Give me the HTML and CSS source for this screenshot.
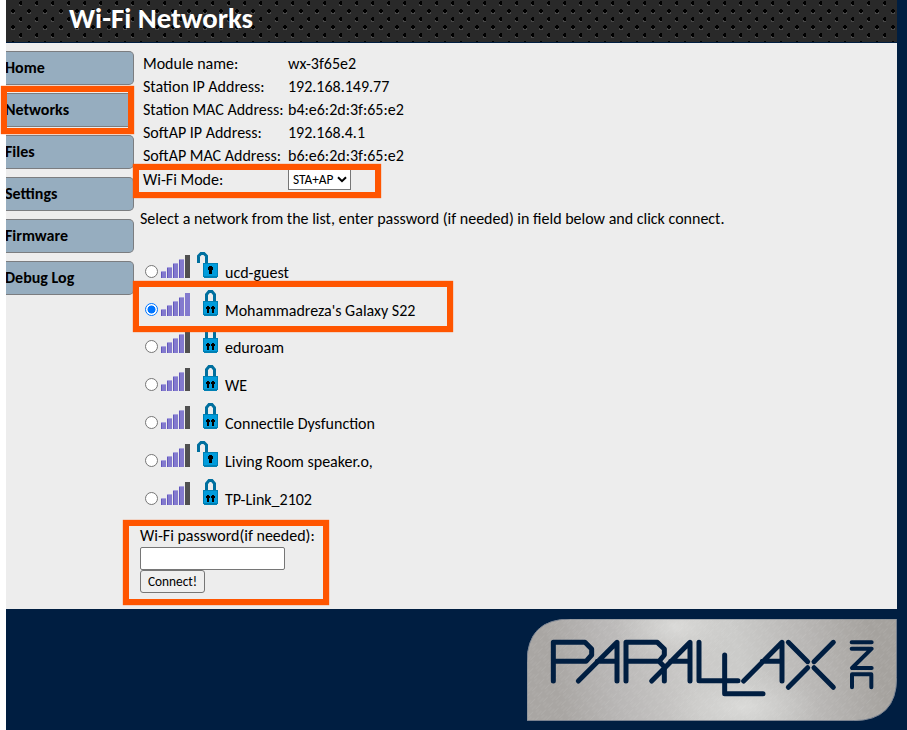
FILE: index.html
```html
<!DOCTYPE html>
<html lang="en">
<head>
<meta charset="utf-8">
<title>Wi-Fi Networks</title>
<link rel="stylesheet" href="styles.css">
</head>
<body>
<svg class="defs" width="0" height="0" aria-hidden="true">
  <symbol id="signal" viewBox="0 0 29 23">
    <g fill="#837ace"><path d="M0 16h5v7H0zM6 12h5v11H6zM12 8h5v15h-5zM18 4h5v19h-5z"/></g>
    <g fill="#aaa4df"><path d="M0 16h5v1H0zM6 12h5v1H6zM12 8h5v1h-5zM18 4h5v1h-5z"/></g>
    <path fill="#6257bd" d="M0 17h1v6H0zM6 13h1v10H6zM12 9h1v14h-1zM18 5h1v18h-1z"/>
  </symbol>
  <symbol id="closed" viewBox="0 0 21 26">
    <path d="M9.500 13V4.500L12 1.500h3L17.500 4.500V13" fill="none" stroke="#006f9e" stroke-width="3"/>
    <path fill="#0080b4" d="M6 11h15v14h-1v1H7v-1H6z"/><path fill="#009cdc" d="M7 12h13v12H7z"/>
    <path d="M10 16h2v1h1v2h-1v4h-2v-4H9v-2h1zM15 16h2v1h1v2h-1v4h-2v-4h-1v-2h1z"/>
  </symbol>
  <symbol id="open" viewBox="0 0 21 26">
    <path d="M1.500 11V4L4 1.500h3L9.500 4V11" fill="none" stroke="#006f9e" stroke-width="3"/>
    <path fill="#0080b4" d="M6 11h15v14h-1v1H7v-1H6z"/><path fill="#009cdc" d="M7 12h13v12H7z"/>
    <path d="M12 14h3v1h1v3h-1v4h-3v-4h-1v-3h1z"/>
  </symbol>
</svg>
<div class="page">
  <header class="header"><svg class="dots" width="891" height="42" aria-hidden="true">
    <defs><pattern id="mesh" width="16" height="16" patternUnits="userSpaceOnUse">
      <path fill="#484848" d="M13 4h4v2h-4zM5 12h4v2H5z"/>
      <path d="M14 1h2v1h1v2h-1v1h-2v-1h-1v-2h1zM6 9h2v1h1v2H8v1H6v-1H5v-2h1z"/>
    </pattern></defs><rect width="891" height="42" fill="url(#mesh)"/></svg><h1>Wi-Fi Networks</h1></header>
  <div class="body">
    <nav class="menu">
      <a>Home</a><a>Networks</a><a>Files</a><a>Settings</a><a>Firmware</a><a>Debug Log</a>
    </nav>
    <main class="content">
      <dl class="info">
        <dt>Module name:</dt><dd>wx-3f65e2</dd>
        <dt>Station IP Address:</dt><dd>192.168.149.77</dd>
        <dt>Station MAC Address:</dt><dd>b4:e6:2d:3f:65:e2</dd>
        <dt>SoftAP IP Address:</dt><dd>192.168.4.1</dd>
        <dt>SoftAP MAC Address:</dt><dd>b6:e6:2d:3f:65:e2</dd>
        <dt>Wi-Fi Mode:</dt><dd><span class="select">STA+AP<svg width="10" height="7" viewBox="0 0 10 7"><path d="M1 1.200l4 4 4-4" fill="none" stroke="#000" stroke-width="2"/></svg></span></dd>
      </dl>
      <p class="hint">Select a network from the list, enter password (if needed) in field below and click connect.</p>
      <div class="networks">
        <label><i class="radio"></i><svg class="signal"><use href="#signal"/><path class="weak" d="M24 0h5v23h-5z"/></svg><svg class="lock"><use href="#open"/></svg><span>ucd-guest</span></label>
        <label><i class="radio on"></i><svg class="signal"><use href="#signal"/><path class="strong" d="M24 0h5v23h-5z"/></svg><svg class="lock"><use href="#closed"/></svg><span>Mohammadreza's Galaxy S22</span></label>
        <label><i class="radio"></i><svg class="signal"><use href="#signal"/><path class="weak" d="M24 0h5v23h-5z"/></svg><svg class="lock"><use href="#closed"/></svg><span>eduroam</span></label>
        <label><i class="radio"></i><svg class="signal"><use href="#signal"/><path class="weak" d="M24 0h5v23h-5z"/></svg><svg class="lock"><use href="#closed"/></svg><span>WE</span></label>
        <label><i class="radio"></i><svg class="signal"><use href="#signal"/><path class="weak" d="M24 0h5v23h-5z"/></svg><svg class="lock"><use href="#closed"/></svg><span>Connectile Dysfunction</span></label>
        <label><i class="radio"></i><svg class="signal"><use href="#signal"/><path class="weak" d="M24 0h5v23h-5z"/></svg><svg class="lock"><use href="#open"/></svg><span>Living Room speaker.o,</span></label>
        <label><i class="radio"></i><svg class="signal"><use href="#signal"/><path class="weak" d="M24 0h5v23h-5z"/></svg><svg class="lock"><use href="#closed"/></svg><span>TP-Link_2102</span></label>
      </div>
      <div class="form">
        <div class="form-label">Wi-Fi password(if needed):</div>
        <input type="text" class="password">
        <button class="connect">Connect!</button>
      </div>
    </main>
  </div>
  <footer class="footer">
    <svg class="logo" width="370" height="102" viewBox="51 57 1110 306" role="img" aria-label="Parallax Inc">
      <defs>
        <linearGradient id="metal" gradientUnits="userSpaceOnUse" x1="150" y1="300" x2="1080" y2="80">
          <stop offset="0" stop-color="#a9a6a3"/><stop offset=".18" stop-color="#b9b7b6"/><stop offset=".42" stop-color="#cbcac8"/><stop offset=".58" stop-color="#cbcbc9"/><stop offset=".8" stop-color="#b8b6b4"/><stop offset="1" stop-color="#a5a29e"/>
        </linearGradient>
        <radialGradient id="shine"><stop offset="0" stop-color="#dededc" stop-opacity=".8"/><stop offset="1" stop-color="#d0d0ce" stop-opacity="0"/></radialGradient>
        <pattern id="brush" width="31" height="23" patternUnits="userSpaceOnUse" patternTransform="rotate(-45)"><path d="M0 3h18M9 10h20M2 17h13" stroke="#fff" stroke-opacity=".12" stroke-width="2"/></pattern>
        <clipPath id="plate"><path d="M51 362V187Q51 57 181 57H1160V232Q1160 362 1030 362Z"/></clipPath>
      </defs>
      <g clip-path="url(#plate)">
        <path fill="url(#metal)" d="M51 57h1110v306H51z"/>
        <ellipse cx="500" cy="80" rx="190" ry="100" fill="url(#shine)"/>
        <ellipse cx="700" cy="320" rx="230" ry="110" fill="url(#shine)"/>
        <path fill="url(#brush)" d="M51 57h1110v306H51z"/>
      </g>
      <path d="M51 362V187Q51 57 181 57H1160V232Q1160 362 1030 362Z" fill="none" stroke="#7f8794" stroke-width="3"/>
      <g fill="none" stroke="#001e41" stroke-width="15" stroke-linecap="round" stroke-linejoin="round">
        <path d="M130 243V127H225L245 147V165L228 184H130"/>
        <path d="M205 243L321 127V243M262 184H321"/>
        <path d="M348 243V127H442L463 147V165L447 184H348M447 184L463 200V243"/>
        <path d="M425 243L540 127V243M482 184H540"/>
        <path d="M567 127V242H684M644 165V281H759"/>
        <path d="M701 243L816 127V243M757 184H816"/>
        <path d="M835 127L893 185M970 127L912 185M893 203L835 262M912 203L970 262"/>
        <path stroke-width="12" d="M1025 127H1085M1025 146H1085L1026 204H1085M1026 262V223H1084V262"/>
      </g>
    </svg>
  </footer>
</div>
<div class="mark mark-menu"></div>
<div class="mark mark-mode"></div>
<div class="mark mark-network"></div>
<div class="mark mark-password"></div>
</body>
</html>
```
FILE: styles.css
```css
* { box-sizing: border-box; }
body { margin: 0; width: 907px; height: 730px; overflow: hidden; position: relative; background: #fff; color: #000; font: 16px/23px Carlito, Lato, sans-serif; }
.defs { position: absolute; }
.page { margin-left: 6px; height: 730px; padding-right: 10px; background: #001e41; }
.header { position: relative; height: 42px; padding-left: 63px; background: #292929; }
.dots { position: absolute; left: 0; top: 0; }
h1 { position: relative; margin: 0; color: #fff; font-size: 28.800px; line-height: 37px; font-weight: 700; white-space: nowrap; }
.body { display: flex; margin-top: 1px; height: 566px; background: #ededed; }
.menu { width: 128px; padding-top: 8px; display: flex; flex-direction: column; gap: 8px; overflow: hidden; }
.menu a { height: 34px; flex: none; border: 1px solid #7b7d80; border-left: 0; border-radius: 0 5px 5px 0; background: #96adbf; font-weight: 700; line-height: 31px; text-indent: -1px; }
.content { padding: 9px 0 0 6px; white-space: nowrap; }
.info { margin: 0; padding-left: 3px; display: grid; grid-template-columns: 145px 200px; grid-template-rows: repeat(5, 23px) 24px; }
.info dd { margin: 0; }
.info dt:nth-last-child(2) { padding-top: 1px; }
.select { display: flex; align-items: center; justify-content: space-between; width: 63px; height: 21px; margin-top: 2px; padding: 0 3px 0 4px; border: 1px solid #767676; background: #fff; font-size: 13.333px; }
.hint { margin: 16px 0 0; height: 23px; }
.networks { display: grid; grid-template-rows: 38px 37px repeat(5, 38px); margin-top: 23px; padding-left: 5px; }
.networks label { display: flex; align-items: flex-start; }
.radio { width: 13px; height: 13px; margin: 12px 3px 0 0; border: 1px solid #767676; border-radius: 50%; background: #fff; }
.radio.on { border-color: #0075ff; background: radial-gradient(circle, #0075ff 3.700px, #fff 4.300px); }
.signal { width: 29px; height: 23px; margin-top: 2px; }
.weak { fill: #505050; }
.strong { fill: #837ace; }
.lock { width: 21px; height: 26px; margin: -1px 7px 0; }
.networks span { padding-top: 8px; }
.form { display: flex; flex-direction: column; align-items: flex-start; margin-top: 7px; }
.form-label { line-height: 22px; height: 22px; }
.password { width: 145px; height: 23px; border: 1px solid #767676; border-radius: 2px; background: #fff; }
.connect { width: 65px; height: 23px; padding: 0; border: 1px solid #767676; border-radius: 3px; background: #efefef; color: #000; font: 13.333px Carlito, Lato, sans-serif; }
.footer { padding-top: 10px; display: flex; justify-content: flex-end; }
.mark { position: absolute; border: 6px solid #ff5500; box-shadow: 0 0 1px #ff5500; }
.mark-menu { left: 1px; top: 86px; width: 133px; height: 48px; }
.mark-mode { left: 133px; top: 164px; width: 248px; height: 34px; }
.mark-network { left: 133px; top: 281px; width: 320px; height: 51px; }
.mark-password { left: 123px; top: 520px; width: 206px; height: 85px; }
```
